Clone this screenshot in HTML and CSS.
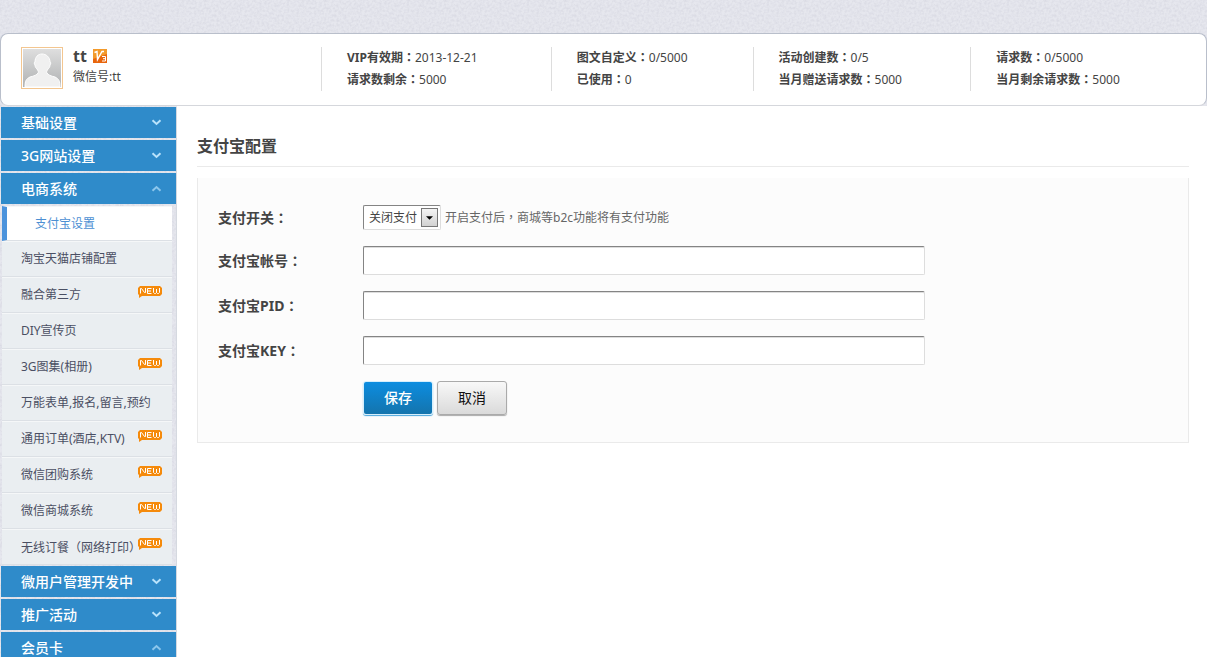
FILE: index.html
```html
<!DOCTYPE html>
<html lang="zh-CN">
<head>
<meta charset="utf-8">
<title>支付宝配置</title>
<link rel="stylesheet" href="styles.css">
</head>
<body>
<svg class="defs" aria-hidden="true">
  <symbol id="down" viewBox="0 0 10 7"><path d="M1 1.300 5 5l4-3.700" fill="none" stroke="#b9e2fb" stroke-width="2"/></symbol>
  <symbol id="up" viewBox="0 0 10 7"><path d="M1 5.700 5 2l4 3.700" fill="none" stroke="#8cc6ec" stroke-width="2"/></symbol>
  <symbol id="new" viewBox="0 0 24 12">
    <path d="M2 0h20l2 2v6l-2 2H4l-3 2V9L0 8V2z" fill="#f58a0b"/>
    <path d="M2.500 7.500v-5h1l3 4h1v-4.500M13.500 2.500h-4v5h4M9.500 5h3.500M15.500 2v4.500l1 1h1l1-1V3v3.500l1 1h1l1-1V2" fill="none" stroke="#fff" stroke-width="1"/>
  </symbol>
</svg>
<header class="account">
  <div class="profile">
    <svg class="avatar" viewBox="0 0 42 42" role="img" aria-label="头像">
      <defs><linearGradient id="shade" x1="0" y1="0" x2="0" y2="1"><stop offset="0" stop-color="#dedede"/><stop offset="1" stop-color="#b0b2b3"/></linearGradient></defs>
      <rect x=".5" y=".5" width="41" height="41" fill="#fff" stroke="#f3c690"/>
      <rect x="2" y="2" width="38" height="38" fill="url(#shade)"/>
      <path d="M4 40c0-6 1-8 5-10 4-1 7-2 8-4 1-1 0-2-1-4-1-1-2-2-2-4-1-1-1-3 0-3 0-5 3-8 7-8s8 3 8 8c1 0 1 2 0 3 0 2-1 3-2 4-1 2-2 3-1 4 1 2 4 3 8 4 4 2 5 4 5 10z" fill="#f0f0f0" stroke="#fff"/>
    </svg>
    <div>
      <div class="name"><strong>tt</strong>
        <svg class="level" viewBox="0 0 14 14" role="img" aria-label="V3">
          <rect width="14" height="14" fill="#e8650c"/><path d="M0 0h14v5L0 10z" fill="#f39a2b"/>
          <path d="M1.500 3.500 4 2.500l.5 8 4.500-8h2" fill="none" stroke="#fff" stroke-width="1.400"/>
          <path d="M9 7.500h3.500v4.500H9M10 9.700h2.500" fill="none" stroke="#fff"/>
        </svg>
      </div>
      <div class="wechat">微信号:tt</div>
    </div>
  </div>
  <div class="stat"><div><b>VIP有效期<i>：</i></b>2013-12-21</div><div><b>请求数剩余<i>：</i></b>5000</div></div>
  <div class="stat"><div><b>图文自定义<i>：</i></b>0/5000</div><div><b>已使用<i>：</i></b>0</div></div>
  <div class="stat"><div><b>活动创建数<i>：</i></b>0/5</div><div><b>当月赠送请求数<i>：</i></b>5000</div></div>
  <div class="stat"><div><b>请求数<i>：</i></b>0/5000</div><div><b>当月剩余请求数<i>：</i></b>5000</div></div>
</header>
<div class="layout">
  <nav class="sidebar">
    <button class="group">基础设置<svg><use href="#down"/></svg></button>
    <button class="group">3G网站设置<svg><use href="#down"/></svg></button>
    <button class="group">电商系统<svg><use href="#up"/></svg></button>
    <ul class="menu">
      <li><a class="active" href="#">支付宝设置</a></li>
      <li><a href="#">淘宝天猫店铺配置</a></li>
      <li><a href="#">融合第三方<svg class="new"><use href="#new"/></svg></a></li>
      <li><a href="#">DIY宣传页</a></li>
      <li><a href="#">3G图集(相册)<svg class="new"><use href="#new"/></svg></a></li>
      <li><a href="#">万能表单,报名,留言,预约</a></li>
      <li><a href="#">通用订单(酒店,KTV)<svg class="new"><use href="#new"/></svg></a></li>
      <li><a href="#">微信团购系统<svg class="new"><use href="#new"/></svg></a></li>
      <li><a href="#">微信商城系统<svg class="new"><use href="#new"/></svg></a></li>
      <li><a href="#"><span>无线订餐<i>（</i>网络打印<i>）</i></span><svg class="new"><use href="#new"/></svg></a></li>
    </ul>
    <button class="group">微用户管理开发中<svg><use href="#down"/></svg></button>
    <button class="group">推广活动<svg><use href="#down"/></svg></button>
    <button class="group">会员卡<svg><use href="#up"/></svg></button>
  </nav>
  <main class="content">
    <h1>支付宝配置</h1>
    <form class="panel">
      <div class="row">
        <label for="switch">支付开关<i>：</i></label>
        <div class="field">
          <span class="picker"><select id="switch"><option>关闭支付</option><option>开启支付</option></select><span class="arrow"><svg viewBox="0 0 8 4"><path d="M0 0h8L4 4z"/></svg></span></span>
          <span class="hint">开启支付后<i>，</i>商城等b2c功能将有支付功能</span>
        </div>
      </div>
      <div class="row"><label for="account">支付宝帐号<i>：</i></label><input id="account" type="text"></div>
      <div class="row"><label for="pid">支付宝PID<i>：</i></label><input id="pid" type="text"></div>
      <div class="row"><label for="key">支付宝KEY<i>：</i></label><input id="key" type="text"></div>
      <div class="actions"><button class="save" type="submit">保存</button><button class="cancel" type="button">取消</button></div>
    </form>
  </main>
</div>
</body>
</html>
```
FILE: styles.css
```css
* { box-sizing: border-box; }
html, body { height: 100%; }
body {
  margin: 0;
  padding-top: 33px;
  display: flex;
  flex-direction: column;
  overflow: hidden;
  color: #444;
  font: 12px/22px "Noto Sans", "Noto Sans CJK SC", sans-serif;
  background: #e6e7ee url("data:image/svg+xml,%3Csvg xmlns='http://www.w3.org/2000/svg' width='120' height='120'%3E%3Cfilter id='n'%3E%3CfeTurbulence type='fractalNoise' baseFrequency='.4' numOctaves='2' stitchTiles='stitch'/%3E%3CfeColorMatrix values='0 0 0 0 .4 0 0 0 0 .4 0 0 0 0 .5 .4 0 0 0 -.14'/%3E%3C/filter%3E%3Crect width='120' height='120' filter='url(%23n)'/%3E%3C/svg%3E");
}
button, input, select { font: inherit; margin: 0; }
/* Full-width punctuation centred in its em box */
i {
  font-style: normal;
  font-family: "Noto Sans CJK TC", sans-serif;
  font-feature-settings: "locl" 0;
}
.defs { display: none; }

.account {
  flex: none;
  display: grid;
  grid-template-columns: 320px 230fr 202fr 218fr 236fr;
  padding: 13px 0 14px;
  background: #fff;
  border: 1px solid #b9bfcb;
  border-bottom-color: #d5d7dc;
  border-radius: 8px;
}
.profile { display: flex; gap: 10px; padding-left: 20px; }
.avatar { width: 42px; height: 42px; }
.name { display: flex; align-items: center; gap: 6px; height: 18px; font-size: 16px; }
.level { width: 14px; height: 14px; }
.wechat { line-height: 24px; }
.stat { border-left: 1px solid #ddd; padding-left: 25px; white-space: nowrap; height: 44px; }
.stat div { height: 22px; line-height: 20px; }

.layout { flex: 1; display: flex; align-items: stretch; min-height: 0; margin-top: 1px; }
.sidebar {
  flex: none;
  width: 177px;
  padding-left: 1px;
  border-right: 1px solid #d5d9e0;
  overflow: hidden;
}
.group {
  display: flex;
  align-items: center;
  justify-content: space-between;
  width: 100%;
  height: 31px;
  margin-bottom: 2px;
  padding: 0 14px 0 20px;
  border: 0;
  color: #fff;
  font-size: 14px;
  font-weight: 500;
  background: #2f8bca;
}
.group svg { width: 11px; height: 7px; }
.menu { list-style: none; margin: 0; padding: 0 4px 1px 1px; }
.menu a {
  position: relative;
  display: flex;
  align-items: center;
  height: 36px;
  padding-left: 19px;
  white-space: nowrap;
  color: #4a4f63;
  text-decoration: none;
  background: #eaeef1;
  border-top: 1px solid #f5f7f8;
  border-bottom: 1px solid #dce0e5;
}
.menu a.active {
  height: 35px;
  padding-left: 28px;
  color: #4c8fd3;
  background: #fff;
  border-left: 5px solid #4b93dc;
}
.new { position: absolute; right: 10px; top: 8px; width: 24px; height: 12px; }

.content { flex: 1; min-width: 0; margin-top: -1px; padding: 26px 18px 0 20px; background: #fff; }
h1 {
  margin: 0 0 11px;
  padding-bottom: 5px;
  font-size: 16px;
  line-height: 29px;
  font-weight: 700;
  border-bottom: 1px solid #eaeaea;
}
.panel {
  display: grid;
  gap: 16px;
  padding: 27px 20px;
  background: #fcfcfc;
  border: solid #eaeaea;
  border-width: 0 1px 1px;
}
.row { display: grid; grid-template-columns: 145px 1fr; align-items: center; }
.row label { font-size: 14px; font-weight: 700; }
.field { display: flex; align-items: center; gap: 4px; }
input, .picker {
  background: #fff;
  border: 1px solid #ddd;
  border-top-color: #848484;
  border-left-color: #848484;
  border-radius: 2px;
}
input { width: 100%; max-width: 562px; height: 29px; padding: 0 6px; box-shadow: inset 0 1px #ddd; }
.picker { display: flex; align-items: center; height: 25px; width: 78px; position: relative; }
select {
  appearance: none;
  width: 100%;
  height: 23px;
  padding: 0 0 0 5px;
  border: 0;
  color: #444;
  background: transparent;
}
.arrow {
  position: absolute;
  right: 2px;
  top: 2px;
  display: grid;
  place-items: center;
  width: 17px;
  height: 19px;
  border: 1px solid #777;
  background: linear-gradient(#f4f4f4, #d2d2d2);
  pointer-events: none;
}
.arrow svg { width: 7px; height: 4px; }
.hint { color: #666; }
.actions { display: flex; gap: 4px; padding-left: 145px; }
.actions button { width: 70px; height: 34px; border-radius: 3px; font-size: 14px; }
.save {
  color: #fff;
  font-weight: 500;
  border: 1px solid #d5effd;
  background: linear-gradient(#0c8de0, #1474ad);
  box-shadow: 0 1px 1px #4ba6dc;
}
.cancel {
  color: #111;
  border: 1px solid #aaa;
  background: linear-gradient(#f8f8f8, #dadada);
  box-shadow: 0 1px 1px #aaa;
}
```
